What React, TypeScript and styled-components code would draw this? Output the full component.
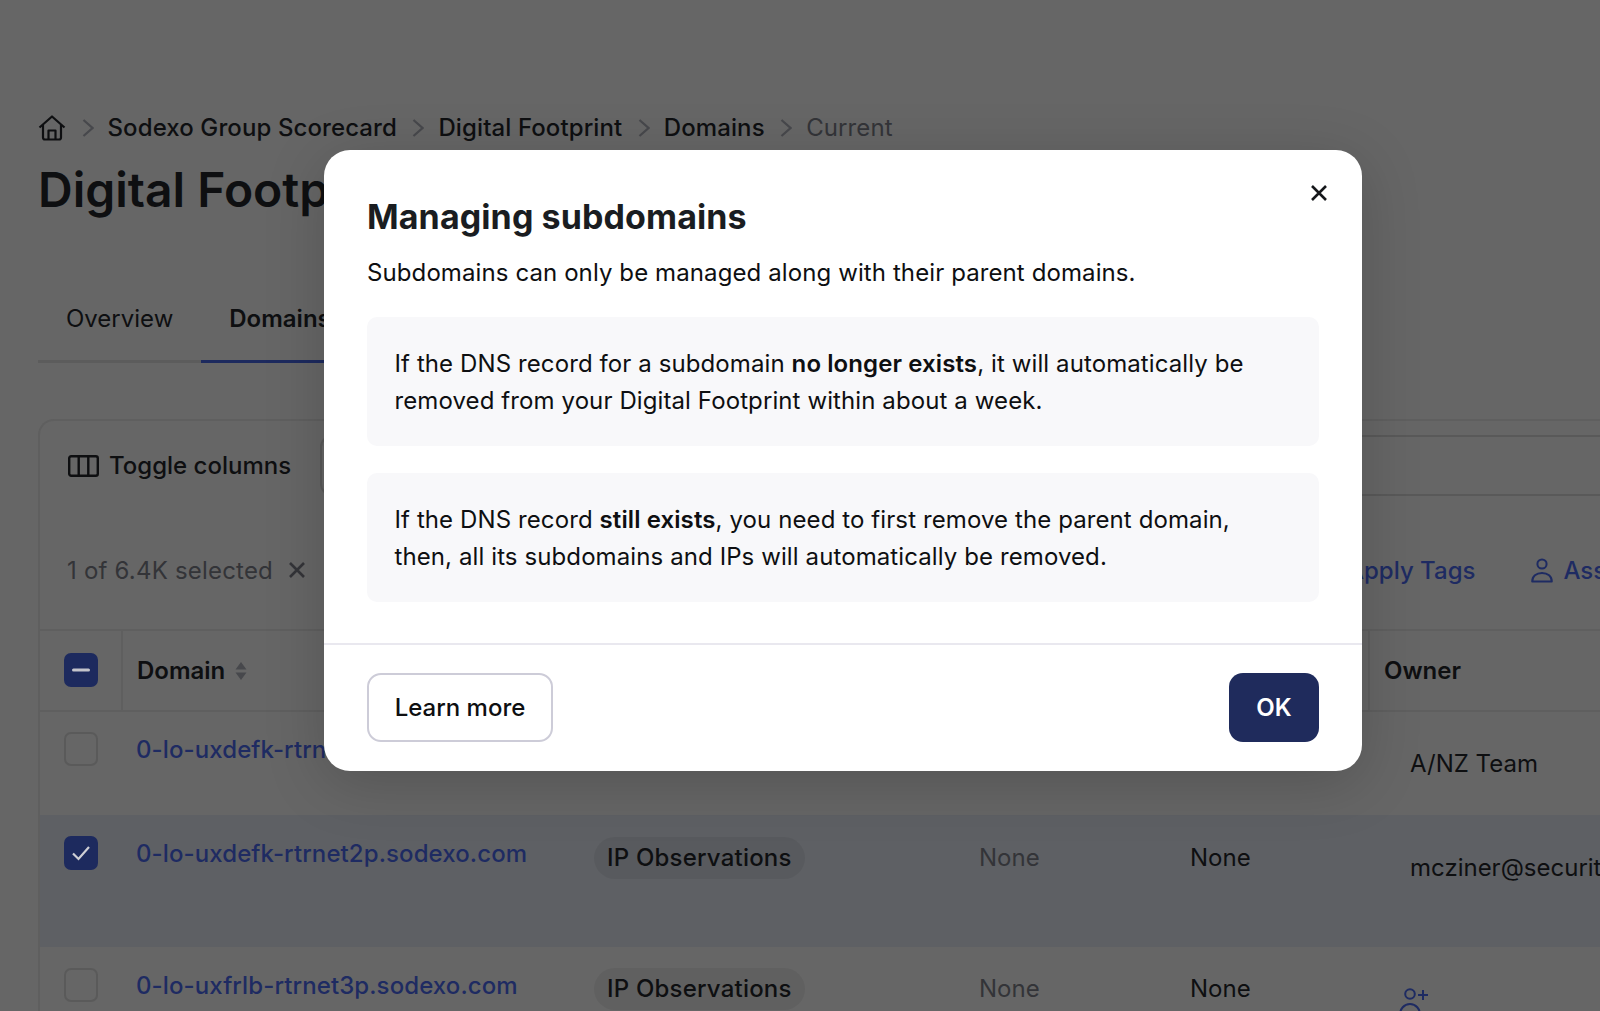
import React from 'react';
import styled, { createGlobalStyle } from 'styled-components';

const colors = {
  backdrop: '#666666',
  text: '#0e0f11',
  muted: '#333438',
  navy: '#1d2a5e',
  link: '#1e2b62',
  line: '#5c5c5c',
  cardLine: '#5f5f5f',
  selected: '#5e6064',
};

const domains = [
  { name: '0-lo-uxdefk-rtrnet1p.sodexo.com', owner: 'A/NZ Team', selected: false },
  { name: '0-lo-uxdefk-rtrnet2p.sodexo.com', owner: 'mcziner@securityscorecard.io', selected: true },
  { name: '0-lo-uxfrlb-rtrnet3p.sodexo.com', owner: '', selected: false },
];

const GlobalStyle = createGlobalStyle`
  html, body {
    margin: 0;
    height: 100%;
    overflow: hidden;
  }
  body {
    font-family: Inter, "Noto Sans", sans-serif;
    font-size: 24px;
    color: ${colors.text};
    background: ${colors.backdrop};
  }
`;

const Page = styled.div`
  position: relative;
  width: 1600px;
  height: 1011px;
  overflow: hidden;
  padding: 110px 0 0 38px;
  box-sizing: border-box;
`;

const Breadcrumb = styled.nav`
  display: flex;
  align-items: center;
  height: 36px;
  line-height: 36px;
  white-space: nowrap;
  font-weight: 500;
  letter-spacing: 0.1px;
`;

const Crumb = styled.span<{ $current?: boolean }>`
  color: ${(p) => (p.$current ? colors.muted : colors.text)};
  font-weight: ${(p) => (p.$current ? 400 : 500)};
`;

const Chevron = styled.svg`
  width: 12px;
  height: 18px;
  margin: 0 14px 0 15.5px;
  flex: none;
`;

const PageTitle = styled.h1`
  margin: 14px 0 0;
  font-size: 48px;
  line-height: 60px;
  font-weight: 600;
  white-space: nowrap;
`;

const Tabs = styled.div`
  display: flex;
  margin: 67px 0 0;
  width: 340px;
  height: 73px;
  border-bottom: 3px solid ${colors.line};
`;

const Tab = styled.div<{ $active?: boolean }>`
  padding: 14px 28px 0;
  height: 59px;
  box-sizing: content-box;
  line-height: 36px;
  font-weight: ${(p) => (p.$active ? 600 : 400)};
  white-space: nowrap;
  ${(p) => p.$active && `border-bottom: 3px solid ${colors.navy}; flex: 1;`}
`;

const Card = styled.section`
  margin-top: 56px;
  width: 1700px;
  border: 2px solid ${colors.cardLine};
  border-right: 0;
  border-radius: 16px 0 0 0;
  box-sizing: border-box;
`;

const ToolBar = styled.div`
  display: flex;
  align-items: center;
  height: 75px;
  padding: 14px 0 0 28px;
  box-sizing: border-box;
`;

const ToggleColumns = styled.div`
  display: flex;
  align-items: center;
  gap: 10px;
  width: 252px;
  flex: none;
  font-weight: 500;
`;

const SearchField = styled.div`
  flex: 1;
  height: 61px;
  border: 2px solid #595959;
  border-radius: 12px 0 0 12px;
  box-sizing: border-box;
`;

const SelectionBar = styled.div`
  display: flex;
  align-items: center;
  height: 135px;
  padding: 15px 0 0 27px;
  box-sizing: border-box;
  border-bottom: 2px solid ${colors.cardLine};
`;

const SelectedCount = styled.span`
  color: ${colors.muted};
  letter-spacing: 0.2px;
  white-space: nowrap;
`;

const ClearIcon = styled.svg`
  width: 18px;
  height: 18px;
  margin-left: 15px;
  flex: none;
`;

const BulkActions = styled.div`
  display: flex;
  align-items: center;
  margin-left: 1041px;
  color: ${colors.link};
  white-space: nowrap;
  font-weight: 500;
`;

const BulkAction = styled.span`
  display: flex;
  align-items: center;
  gap: 10px;
  margin-right: 56px;
`;

const TableRow = styled.div<{ $selected?: boolean; $height: number }>`
  display: grid;
  grid-template-columns: 81px 460px 384px 211px 192px 1fr;
  height: ${(p) => p.$height}px;
  background: ${(p) => (p.$selected ? colors.selected : 'transparent')};
`;

const HeaderRow = styled(TableRow)`
  border-bottom: 2px solid ${colors.cardLine};
  box-sizing: border-box;
  align-items: center;
`;

const HeaderCell = styled.div<{ $divided?: boolean }>`
  display: flex;
  align-items: center;
  gap: 10px;
  height: 100%;
  padding-left: 14px;
  box-sizing: border-box;
  font-weight: 600;
  ${(p) => p.$divided && `border-left: 2px solid ${colors.cardLine};`}
`;

const CheckCell = styled.div<{ $top: number }>`
  padding: ${(p) => p.$top}px 0 0 24px;
`;

const CheckBox = styled.div<{ $checked?: boolean }>`
  display: flex;
  align-items: center;
  justify-content: center;
  width: 34px;
  height: 34px;
  border-radius: 7px;
  box-sizing: border-box;
  background: ${(p) => (p.$checked ? colors.navy : 'transparent')};
  border: 2px solid ${(p) => (p.$checked ? colors.navy : '#5a5a5a')};
`;

const HeaderCheckCell = styled.div`
  display: flex;
  align-items: center;
  padding: 0 0 2px 24px;
`;

const DomainCell = styled.a<{ $top: number }>`
  padding: ${(p) => p.$top}px 0 0 15px;
  line-height: 36px;
  color: ${colors.link};
  white-space: nowrap;
  font-weight: 500;
  letter-spacing: 0.1px;
`;

const Cell = styled.div<{ $top: number; $muted?: boolean; $left: number }>`
  padding: ${(p) => p.$top}px 0 0 ${(p) => p.$left}px;
  line-height: 36px;
  color: ${(p) => (p.$muted ? colors.muted : colors.text)};
  white-space: nowrap;
`;

const Pill = styled.span`
  display: inline-block;
  height: 42px;
  line-height: 42px;
  padding: 0 13px;
  border-radius: 21px;
  background: rgba(0, 0, 0, 0.06);
  font-weight: 500;
  letter-spacing: 0.2px;
`;

const Modal = styled.div`
  position: absolute;
  left: 324px;
  top: 150px;
  width: 1038px;
  height: 621px;
  display: flex;
  flex-direction: column;
  background: #ffffff;
  border-radius: 26px;
  box-shadow: 0 12px 60px rgba(0, 0, 0, 0.18);
`;

const CloseButton = styled.button`
  position: absolute;
  top: 34px;
  right: 33px;
  width: 20px;
  height: 20px;
  padding: 0;
  border: 0;
  background: none;
`;

const ModalBody = styled.div`
  flex: 1;
  padding: 46px 43px 0;
`;

const ModalTitle = styled.h2`
  margin: 0;
  font-size: 34px;
  line-height: 42px;
  font-weight: 700;
  letter-spacing: 0.1px;
  color: #1a1d21;
`;

const ModalIntro = styled.p`
  margin: 17px 0 26px;
  line-height: 36px;
  letter-spacing: 0.1px;
`;

const Note = styled.p`
  margin: 0 0 27px;
  padding: 28px 27px 27px 27.5px;
  background: #f8f8fa;
  border-radius: 10px;
  line-height: 37px;
  letter-spacing: 0.1px;

  b {
    font-weight: 600;
  }
`;

const ModalFooter = styled.footer`
  display: flex;
  justify-content: space-between;
  height: 128px;
  padding: 28px 43px 0;
  box-sizing: border-box;
  border-top: 2px solid #e9e8ef;
`;

const SecondaryButton = styled.button`
  width: 186px;
  height: 69px;
  border: 2px solid #cdccd8;
  border-radius: 14px;
  background: #ffffff;
  font: 500 24px Inter, sans-serif;
  color: ${colors.text};
`;

const PrimaryButton = styled.button`
  width: 90px;
  height: 69px;
  border: 0;
  border-radius: 14px;
  background: #1f2b5c;
  font: 600 24px Inter, sans-serif;
  color: #ffffff;
`;

const ChevronIcon = () => (
  <Chevron viewBox="0 0 12 18" fill="none" stroke="#47484c" strokeWidth="2.2">
    <path d="M1.5 1l9 8-9 8" />
  </Chevron>
);

const HomeIcon = () => (
  <svg width="28" height="26" viewBox="0 0 28 26" fill="none" stroke={colors.text} strokeWidth="2.2" strokeLinejoin="round">
    <path d="M1.5 12.5L14 1.5l12.5 11" />
    <path d="M5 10v12.5a2 2 0 0 0 2 2h14a2 2 0 0 0 2-2V10" />
    <path d="M10.5 24.5v-9h7v9" />
  </svg>
);

const ColumnsIcon = () => (
  <svg width="31" height="22" viewBox="0 0 31 22" fill="none" stroke={colors.text} strokeWidth="2.4">
    <rect x="1.2" y="1.2" width="28.6" height="19.6" rx="2" />
    <path d="M10.7 1v20M20.3 1v20" />
  </svg>
);

const PersonIcon = () => (
  <svg width="22" height="25" viewBox="0 0 22 25" fill="none" stroke={colors.link} strokeWidth="2">
    <circle cx="11" cy="6" r="4.6" />
    <path d="M1.2 23.5c0-5.2 4-8.5 9.8-8.5s9.8 3.3 9.8 8.5z" strokeLinejoin="round" />
  </svg>
);

const AddPersonIcon = () => (
  <svg width="32" height="30" viewBox="0 0 32 30" fill="none" stroke={colors.link} strokeWidth="2">
    <circle cx="12" cy="7" r="4.8" />
    <path d="M2 28c0-6 4-11 10-11s10 5 10 11z" strokeLinejoin="round" />
    <path d="M25 3v10M20 8h10" />
  </svg>
);

const SortIcon = () => (
  <svg width="12" height="18" viewBox="0 0 12 18" fill="#47484c">
    <path d="M6 0l5.5 7.5H.5zM6 18L.5 10.5h11z" />
  </svg>
);

const CloseIcon = ({ color, size }: { color: string; size: number }) => (
  <svg width={size} height={size} viewBox="0 0 18 18" fill="none" stroke={color} strokeWidth="2.6">
    <path d="M2 2l14 14M16 2L2 16" />
  </svg>
);

const App = () => (
  <>
    <GlobalStyle />
    <Page>
      <Breadcrumb>
        <HomeIcon />
        <ChevronIcon />
        <Crumb>Sodexo Group Scorecard</Crumb>
        <ChevronIcon />
        <Crumb>Digital Footprint</Crumb>
        <ChevronIcon />
        <Crumb>Domains</Crumb>
        <ChevronIcon />
        <Crumb $current>Current</Crumb>
      </Breadcrumb>
      <PageTitle>Digital Footprint</PageTitle>
      <Tabs>
        <Tab>Overview</Tab>
        <Tab $active>Domains</Tab>
      </Tabs>
      <Card>
        <ToolBar>
          <ToggleColumns>
            <ColumnsIcon />
            Toggle columns
          </ToggleColumns>
          <SearchField />
        </ToolBar>
        <SelectionBar>
          <SelectedCount>1 of 6.4K selected</SelectedCount>
          <ClearIcon viewBox="0 0 18 18" fill="none" stroke={colors.muted} strokeWidth="2.6">
            <path d="M2 2l14 14M16 2L2 16" />
          </ClearIcon>
          <BulkActions>
            <BulkAction>Apply Tags</BulkAction>
            <BulkAction>
              <PersonIcon />
              Assign Owner
            </BulkAction>
          </BulkActions>
        </SelectionBar>
        <HeaderRow $height={81}>
          <HeaderCheckCell>
            <CheckBox $checked>
              <svg width="18" height="4" viewBox="0 0 18 4">
                <rect width="18" height="3" y="0.5" rx="1.5" fill="#c4c4cb" />
              </svg>
            </CheckBox>
          </HeaderCheckCell>
          <HeaderCell $divided>
            Domain
            <SortIcon />
          </HeaderCell>
          <HeaderCell />
          <HeaderCell />
          <HeaderCell />
          <HeaderCell $divided>Owner</HeaderCell>
        </HeaderRow>
        {domains.map((d, i) => {
          const height = [103, 132, 120][i];
          const boxTop = [20, 21, 21][i];
          const linkTop = [20, 21, 21][i];
          const top = [0, 22, 21][i];
          const ownerTop = [34, 35, 40][i];
          return (
            <TableRow key={d.name} $selected={d.selected} $height={height}>
              <CheckCell $top={boxTop}>
                <CheckBox $checked={d.selected}>
                  {d.selected && (
                    <svg width="20" height="16" viewBox="0 0 20 16" fill="none" stroke="#cfcfd5" strokeWidth="2.2">
                      <path d="M2 8.5l5.5 5.500L18 2" />
                    </svg>
                  )}
                </CheckBox>
              </CheckCell>
              <DomainCell $top={linkTop}>{d.name}</DomainCell>
              <Cell $top={top} $left={13}>
                {i > 0 && <Pill>IP Observations</Pill>}
              </Cell>
              <Cell $top={top + 3} $left={14} $muted>
                {i > 0 && 'None'}
              </Cell>
              <Cell $top={top + 3} $left={14}>
                {i > 0 && 'None'}
              </Cell>
              <Cell $top={ownerTop} $left={d.owner ? 42 : 30}>
                {d.owner || <AddPersonIcon />}
              </Cell>
            </TableRow>
          );
        })}
      </Card>
      <Modal>
        <CloseButton aria-label="Close">
          <CloseIcon color="#15171a" size={18} />
        </CloseButton>
        <ModalBody>
          <ModalTitle>Managing subdomains</ModalTitle>
          <ModalIntro>Subdomains can only be managed along with their parent domains.</ModalIntro>
          <Note>
            If the DNS record for a subdomain <b>no longer exists</b>, it will automatically be
            <br />
            removed from your Digital Footprint within about a week.
          </Note>
          <Note>
            If the DNS record <b>still exists</b>, you need to first remove the parent domain,
            <br />
            then, all its subdomains and IPs will automatically be removed.
          </Note>
        </ModalBody>
        <ModalFooter>
          <SecondaryButton>Learn more</SecondaryButton>
          <PrimaryButton>OK</PrimaryButton>
        </ModalFooter>
      </Modal>
    </Page>
  </>
);

export default App;
